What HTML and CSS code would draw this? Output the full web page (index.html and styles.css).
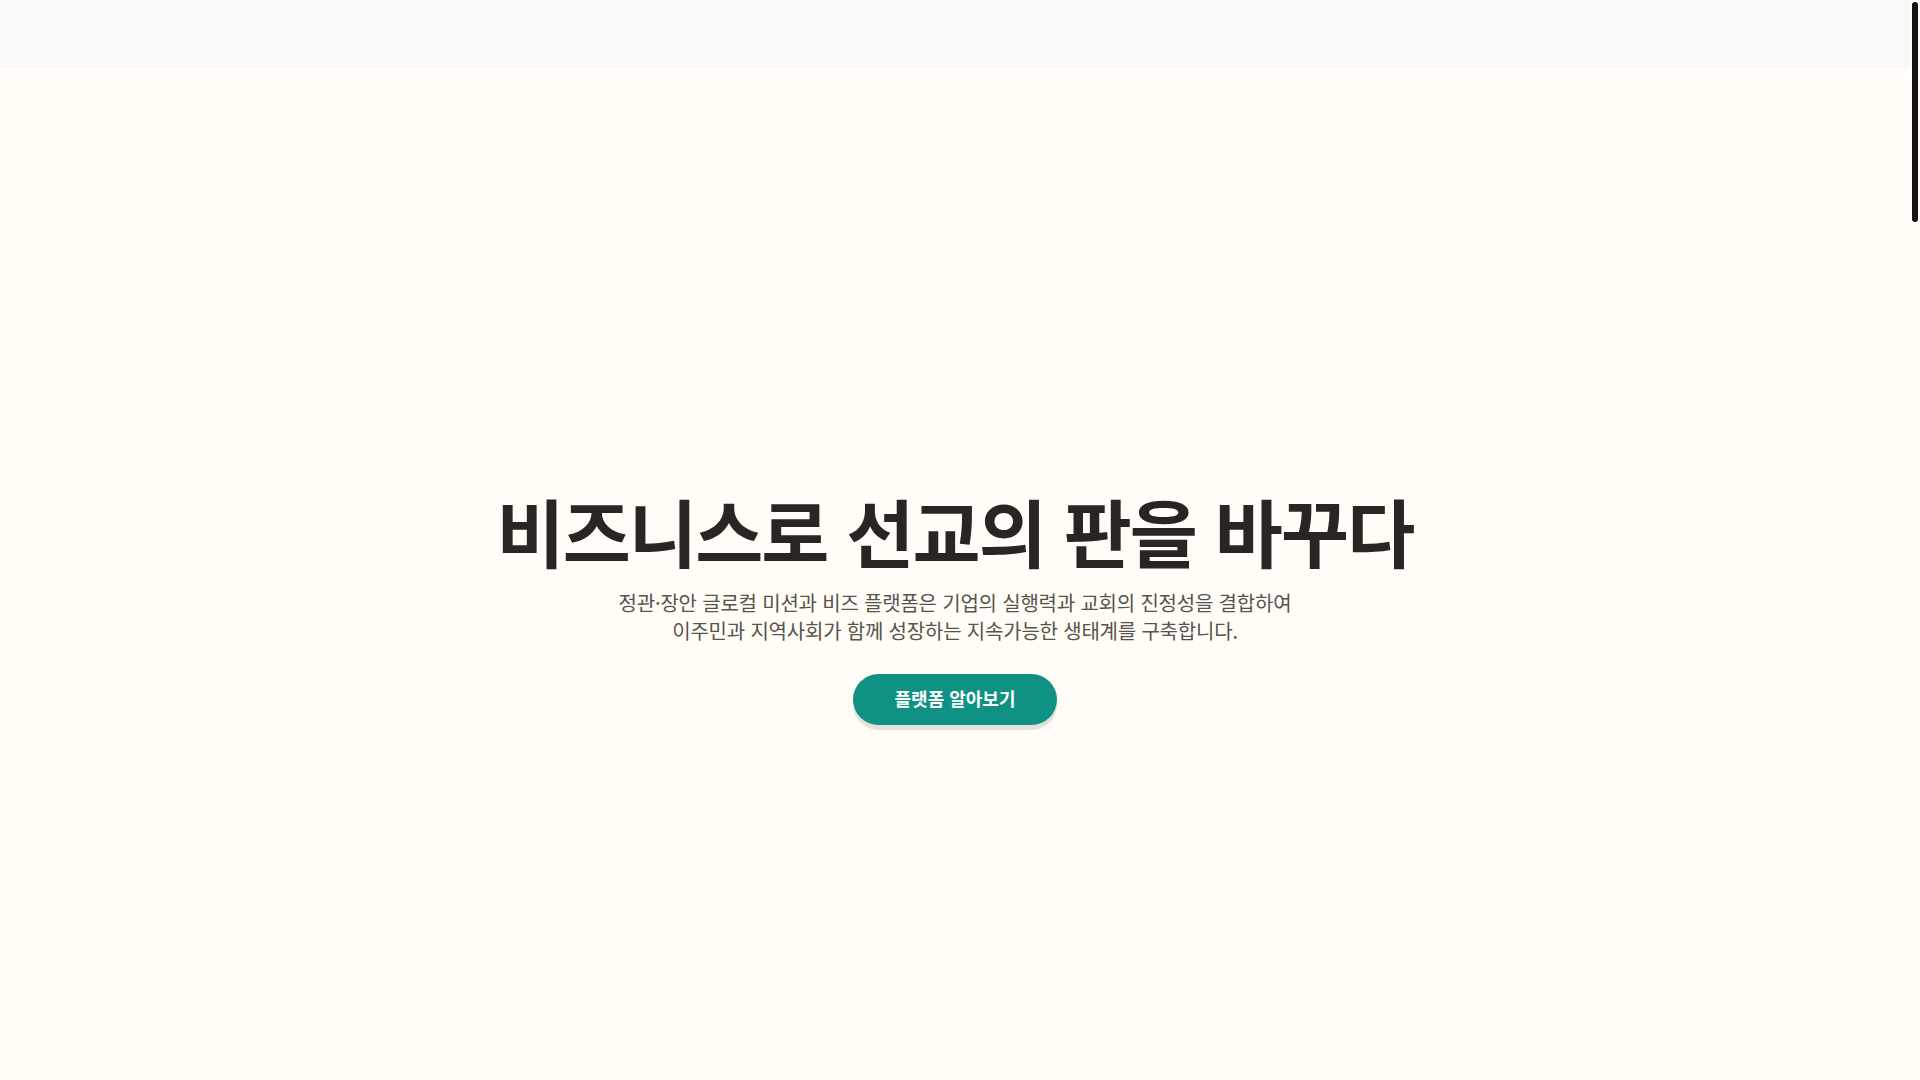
FILE: index.html
```html
<!DOCTYPE html>
<html lang="ko">
<head>
<meta charset="utf-8">
<title>정관·장안 글로컬 미션과 비즈</title>
<link rel="stylesheet" href="styles.css">
</head>
<body>
<div class="page">
  <header class="topbar"></header>
  <main>
    <section class="hero">
      <div class="hero-inner">
        <h1 class="hero-title">비즈니스로 선교의 판을 바꾸다</h1>
        <p class="hero-sub">정관·장안 글로컬 미션과 비즈 플랫폼은 기업의 실행력과 교회의 진정성을 결합하여<br>이주민과 지역사회가 함께 성장하는 지속가능한 생태계를 구축합니다.</p>
        <a class="hero-btn" href="#platform">플랫폼 알아보기</a>
      </div>
    </section>
    <section class="rest" id="platform"></section>
  </main>
</div>
<div class="scroll-track" aria-hidden="true"><div class="scroll-thumb"></div></div>
</body>
</html>
```

FILE: styles.css
```css
html, body {
  margin: 0;
  padding: 0;
  height: 100%;
  overflow: hidden;
}
body {
  background: #fffdf5;
  font-family: "Noto Sans CJK KR", "Noto Sans", sans-serif;
  color: #2a2522;
  display: flex;
}
.page {
  flex: 1;
  height: 100vh;
  overflow-y: auto;
}
.scroll-track {
  width: 10px;
  height: 100vh;
  background: #fffdf5;
  padding: 2px;
  box-sizing: border-box;
}
.scroll-thumb {
  width: 6px;
  height: 220px;
  background: #141414;
  border-radius: 3px;
}
.topbar {
  height: 68px;
  background: #f9f9f7;
  border-bottom: 1px solid #f5f5f1;
  box-sizing: border-box;
}
.hero {
  min-height: 100vh;
  box-sizing: border-box;
  padding-bottom: 6px;
  display: flex;
  align-items: center;
  justify-content: center;
}
.hero-inner {
  display: flex;
  flex-direction: column;
  align-items: center;
  text-align: center;
}
.hero-title {
  margin: 0;
  font-size: 74px;
  line-height: 89px;
  font-weight: 700;
  letter-spacing: -1.9px;
  color: #2a2522;
}
.hero-sub {
  margin: 15px 0 0;
  font-size: 20px;
  line-height: 28px;
  letter-spacing: -0.2px;
  color: #57534e;
  font-weight: 400;
}
.hero-btn {
  margin-top: 29px;
  display: inline-flex;
  align-items: center;
  justify-content: center;
  box-sizing: border-box;
  width: 204px;
  height: 51px;
  padding-bottom: 3px;
  border-radius: 26px;
  background: #0f9284;
  color: #ffffff;
  font-size: 18px;
  font-weight: 700;
  text-decoration: none;
  box-shadow: 0 5px 0 #e5e1d8;
}
.rest {
  height: 4150px;
}
```
